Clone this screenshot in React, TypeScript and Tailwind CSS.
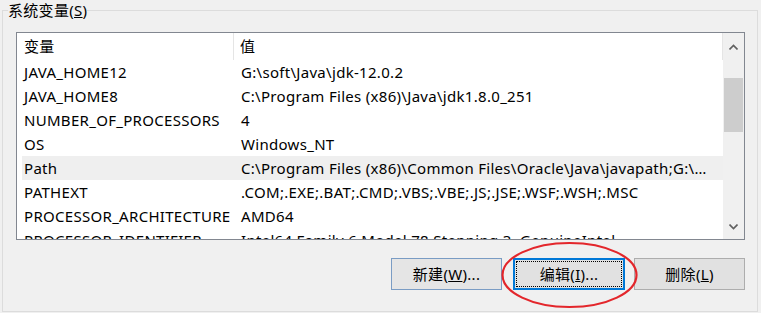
import React from "react";

const rows: [string, string][] = [
  ["JAVA_HOME12", "G:\\soft\\Java\\jdk-12.0.2"],
  ["JAVA_HOME8", "C:\\Program Files (x86)\\Java\\jdk1.8.0_251"],
  ["NUMBER_OF_PROCESSORS", "4"],
  ["OS", "Windows_NT"],
  ["Path", "C:\\Program Files (x86)\\Common Files\\Oracle\\Java\\javapath;G:\\soft\\Java\\jdk-12.0.2\\bin"],
  ["PATHEXT", ".COM;.EXE;.BAT;.CMD;.VBS;.VBE;.JS;.JSE;.WSF;.WSH;.MSC"],
  ["PROCESSOR_ARCHITECTURE", "AMD64"],
  ["PROCESSOR_IDENTIFIER", "Intel64 Family 6 Model 78 Stepping 3, GenuineIntel"],
];

function Chevron({ down }: { down?: boolean }) {
  return (
    <svg width="9" height="6" viewBox="0 0 9 6" className={down ? "rotate-180" : ""}>
      <path d="M0.5 5.5 L4.5 1.5 L8.5 5.5" fill="none" stroke="#606060" strokeWidth="1.6" />
    </svg>
  );
}

export default function App() {
  return (
    <div className="relative w-[761px] h-[313px] bg-[#f0f0f0] text-black font-['Noto_Sans','Noto_Sans_CJK_SC',sans-serif] text-[15px] tracking-[0.3px] overflow-hidden">
      <fieldset className="ml-[2px] w-[756px] h-[312px] border border-[#dcdcdc]">
        <legend className="ml-[5px] leading-[20px]">
          系统变量(<span className="underline">S</span>)
        </legend>

        {/* list view */}
        <div className="ml-[13px] mt-[12px] w-[729px] h-[208px] border border-[#828790] bg-white flex overflow-hidden">
          <div className="flex-1 min-w-0 flex flex-col">
            <div className="h-[27px] flex items-center shrink-0">
              <div className="w-[217px] h-full pl-[7px] flex items-center border-r border-[#e5e5e5]">变量</div>
              <div className="flex-1 h-full pl-[6px] flex items-center border-r border-[#e5e5e5]">值</div>
            </div>
            {rows.map(([name, value]) => (
              <div
                key={name}
                className={`h-[24px] shrink-0 ml-[5px] flex items-center ${name === "Path" ? "bg-[#efefef]" : ""}`}
              >
                <div className="w-[212px] shrink-0 pl-[2px] whitespace-nowrap">{name}</div>
                <div className="flex-1 min-w-0 pl-[7px] pr-[10px] truncate">{value}</div>
              </div>
            ))}
          </div>
          {/* scrollbar */}
          <div className="w-[21px] shrink-0 h-full bg-[#f0f0f0] flex flex-col items-center">
            <div className="h-[27px] w-full flex items-center justify-center">
              <Chevron />
            </div>
            <div className="h-[18px]" />
            <div className="w-[19px] h-[54px] bg-[#cdcdcd]" />
            <div className="flex-1" />
            <div className="h-[24px] w-full flex items-center justify-center">
              <Chevron down />
            </div>
          </div>
        </div>

        {/* buttons */}
        <div className="mt-[18px] w-[742px] flex justify-end">
          <button className="w-[111px] h-[32px] bg-[#e5e5e5] border border-[#7a9cc4]">
            新建(<span className="underline">W</span>)...
          </button>
          <button className="ml-[11px] w-[112px] h-[32px] bg-[#e1e1e1] border-2 border-[#0078d7] p-[1px]">
            <span className="w-full h-full flex items-center justify-center border border-dotted border-black">
              编辑(<span className="underline">I</span>)...
            </span>
          </button>
          <button className="ml-[9px] w-[111px] h-[32px] bg-[#e1e1e1] border border-[#adadad]">
            删除(<span className="underline">L</span>)
          </button>
        </div>
      </fieldset>

      {/* red annotation */}
      <svg className="absolute left-[500px] top-[241px]" width="140" height="70" viewBox="0 0 140 70">
        <ellipse cx="69.5" cy="34" rx="67" ry="32" fill="none" stroke="#e3262b" strokeWidth="2.2" />
      </svg>
    </div>
  );
}
